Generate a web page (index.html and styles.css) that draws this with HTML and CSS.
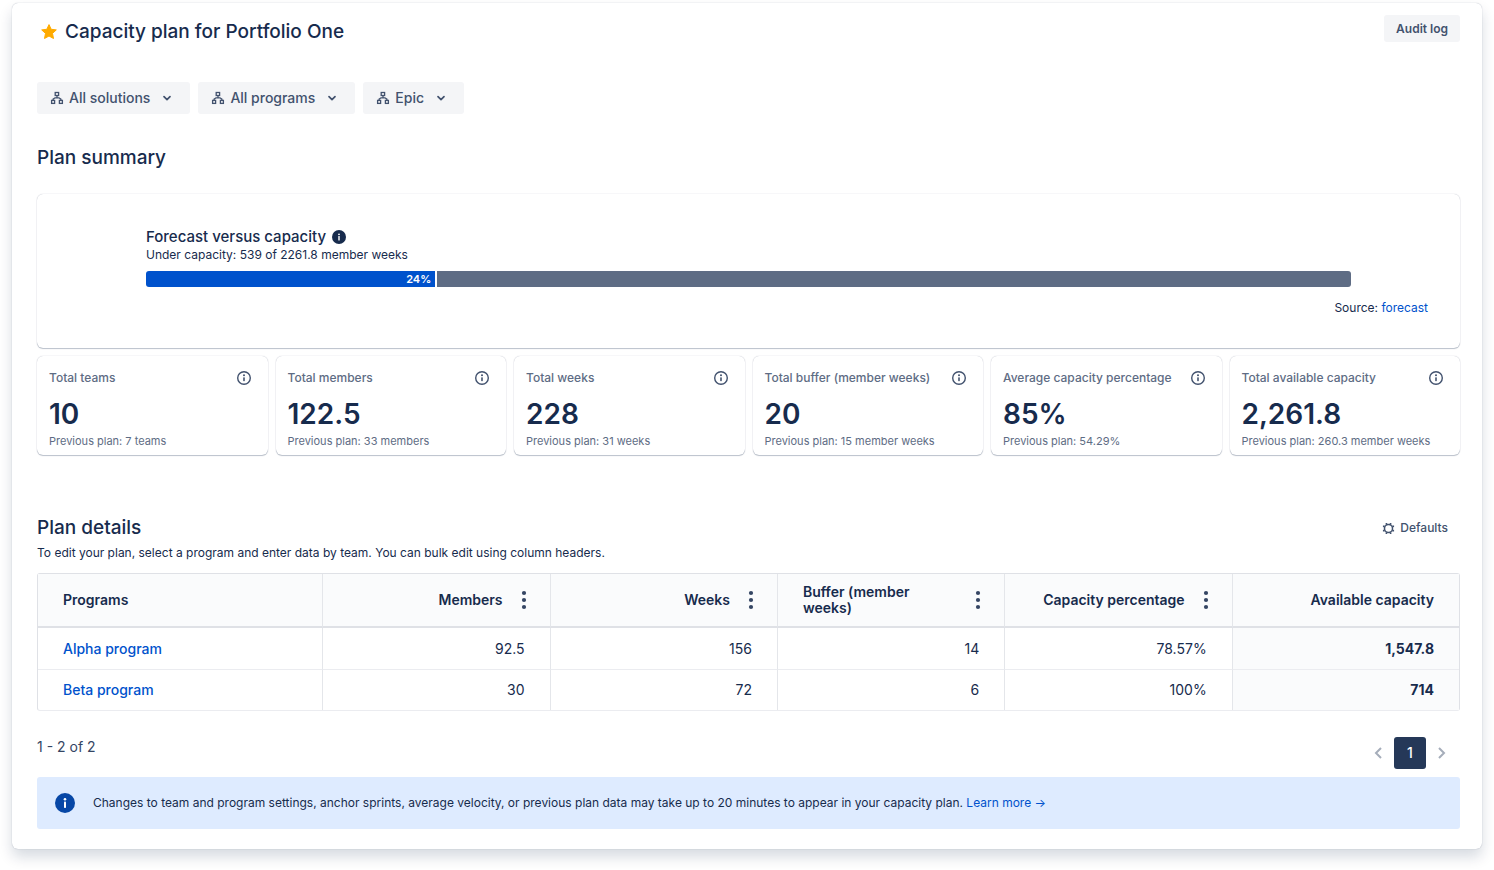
FILE: index.html
```html
<!DOCTYPE html>
<html lang="en">
<head>
<meta charset="utf-8">
<meta name="viewport" content="width=device-width, initial-scale=1">
<title>Capacity plan for Portfolio One</title>
<link rel="stylesheet" href="styles.css">
</head>
<body>
<svg class="sprite" aria-hidden="true">
  <symbol id="tree" viewBox="0 0 14 14"><g fill="none" stroke="currentColor" stroke-width="1.300"><rect x="5.200" y="1.500" width="3.400" height="3"/><rect x="1.600" y="9.400" width="3" height="3"/><rect x="9.400" y="9.400" width="3" height="3"/><path d="M7 4.500v2.300M3.100 9.400V8.200L5 6.800h4l1.900 1.400v1.200"/></g></symbol>
  <symbol id="chevron" viewBox="0 0 10 10"><path d="M2 3.600l3 3 3-3" fill="none" stroke="currentColor" stroke-width="1.700" stroke-linecap="round" stroke-linejoin="round"/></symbol>
  <symbol id="info" viewBox="0 0 16 16"><circle cx="8" cy="8" r="6.300" fill="none" stroke="currentColor" stroke-width="1.400"/><circle cx="8" cy="5.300" r="1" fill="currentColor"/><rect x="7.200" y="7.200" width="1.600" height="4" rx=".6" fill="currentColor"/></symbol>
  <symbol id="info-solid" viewBox="0 0 20 20"><circle cx="10" cy="10" r="10" fill="currentColor"/><circle cx="10" cy="6.200" r="1.300" fill="#fff"/><rect x="9" y="8.600" width="2" height="6.400" rx=".8" fill="#fff"/></symbol>
  <symbol id="dots" viewBox="0 0 6 20"><g fill="currentColor"><circle cx="3" cy="3" r="2.100"/><circle cx="3" cy="10" r="2.100"/><circle cx="3" cy="17" r="2.100"/></g></symbol>
</svg>
<main class="page">
  <header class="page-header">
    <div class="title">
      <svg class="star" viewBox="0 0 18 18" aria-hidden="true"><path d="M9 1.600l2.200 4.700 5.100.6-3.800 3.500 1 5.100L9 13l-4.500 2.500 1-5.100L1.700 6.900l5.100-.6z" fill="#ffab00" stroke="#ffab00" stroke-width="1" stroke-linejoin="round"/></svg>
      <h1>Capacity plan for Portfolio One</h1>
    </div>
    <button type="button" class="button button-small">Audit log</button>
  </header>

  <nav class="filters" aria-label="Filters">
    <button type="button" class="button"><svg class="icon-tree"><use href="#tree"/></svg>All solutions<svg class="icon-chevron"><use href="#chevron"/></svg></button>
    <button type="button" class="button"><svg class="icon-tree"><use href="#tree"/></svg>All programs<svg class="icon-chevron"><use href="#chevron"/></svg></button>
    <button type="button" class="button"><svg class="icon-tree"><use href="#tree"/></svg>Epic<svg class="icon-chevron"><use href="#chevron"/></svg></button>
  </nav>

  <section>
    <h2 class="summary-heading">Plan summary</h2>
    <div class="card forecast">
      <div class="forecast-chart">
        <h3>Forecast versus capacity <svg class="icon-help"><use href="#info-solid"/></svg></h3>
        <p>Under capacity: 539 of 2261.8 member weeks</p>
        <div class="bar"><div class="bar-fill" style="width: 24%">24%</div><div class="bar-rest"></div></div>
      </div>
      <p class="source">Source: <a href="#">forecast</a></p>
    </div>
    <div class="stats">
      <article class="card stat"><div class="stat-head"><h3>Total teams</h3><svg class="icon-info"><use href="#info"/></svg></div><strong>10</strong><p>Previous plan: 7 teams</p></article>
      <article class="card stat"><div class="stat-head"><h3>Total members</h3><svg class="icon-info"><use href="#info"/></svg></div><strong>122.5</strong><p>Previous plan: 33 members</p></article>
      <article class="card stat"><div class="stat-head"><h3>Total weeks</h3><svg class="icon-info"><use href="#info"/></svg></div><strong>228</strong><p>Previous plan: 31 weeks</p></article>
      <article class="card stat"><div class="stat-head"><h3>Total buffer (member weeks)</h3><svg class="icon-info"><use href="#info"/></svg></div><strong>20</strong><p>Previous plan: 15 member weeks</p></article>
      <article class="card stat"><div class="stat-head"><h3>Average capacity percentage</h3><svg class="icon-info"><use href="#info"/></svg></div><strong>85%</strong><p>Previous plan: 54.29%</p></article>
      <article class="card stat"><div class="stat-head"><h3>Total available capacity</h3><svg class="icon-info"><use href="#info"/></svg></div><strong>2,261.8</strong><p>Previous plan: 260.3 member weeks</p></article>
    </div>
  </section>

  <section class="details">
    <div class="details-head">
      <h2>Plan details</h2>
      <button type="button" class="defaults"><svg class="icon-gear" viewBox="0 0 14 14"><circle cx="7" cy="7" r="4.300" fill="none" stroke="currentColor" stroke-width="1.600"/><path d="M4.800 1v2M9.200 1v2M4.800 11v2M9.200 11v2M1 4.800h2M1 9.200h2M11 4.800h2M11 9.200h2" stroke="currentColor" stroke-width="1.800"/></svg>Defaults</button>
    </div>
    <p class="hint">To edit your plan, select a program and enter data by team. You can bulk edit using column headers.</p>
    <table>
      <thead>
        <tr>
          <th class="col-name" scope="col">Programs</th>
          <th scope="col"><div class="th"><span>Members</span><button type="button" aria-label="Edit members"><svg><use href="#dots"/></svg></button></div></th>
          <th scope="col"><div class="th"><span>Weeks</span><button type="button" aria-label="Edit weeks"><svg><use href="#dots"/></svg></button></div></th>
          <th scope="col"><div class="th th-wrap"><span>Buffer (member weeks)</span><button type="button" aria-label="Edit buffer"><svg><use href="#dots"/></svg></button></div></th>
          <th scope="col"><div class="th"><span>Capacity percentage</span><button type="button" aria-label="Edit capacity percentage"><svg><use href="#dots"/></svg></button></div></th>
          <th scope="col">Available capacity</th>
        </tr>
      </thead>
      <tbody>
        <tr><td class="col-name"><a href="#">Alpha program</a></td><td>92.5</td><td>156</td><td>14</td><td>78.57%</td><td class="total">1,547.8</td></tr>
        <tr><td class="col-name"><a href="#">Beta program</a></td><td>30</td><td>72</td><td>6</td><td>100%</td><td class="total">714</td></tr>
      </tbody>
    </table>
    <div class="table-footer">
      <span>1 - 2 of 2</span>
      <nav class="pager" aria-label="Pages">
        <button type="button" class="arrow" aria-label="Previous page"><svg viewBox="0 0 10 14"><path d="M8 2L3 7l5 5"/></svg></button>
        <button type="button" class="current">1</button>
        <button type="button" class="arrow" aria-label="Next page"><svg viewBox="0 0 10 14"><path d="M2 2l5 5-5 5"/></svg></button>
      </nav>
    </div>
    <div class="banner">
      <svg class="icon-banner"><use href="#info-solid"/></svg>
      <p>Changes to team and program settings, anchor sprints, average velocity, or previous plan data may take up to 20 minutes to appear in your capacity plan. <a href="#">Learn more →</a></p>
    </div>
  </section>
</main>
</body>
</html>
```
FILE: styles.css
```css
* {
  box-sizing: border-box;
}

body {
  margin: 0;
  padding: 3px 12px 20px;
  background: #fff;
  color: #172b4d;
  font: 14px/20px Inter, "Liberation Sans", sans-serif;
}

h1, h2, h3, p {
  margin: 0;
}

button {
  border: 0;
  background: none;
  padding: 0;
  color: inherit;
  font: inherit;
}

a {
  color: #0052cc;
  text-decoration: none;
}

svg {
  flex: none;
  display: block;
}

.sprite {
  position: absolute;
  width: 0;
  height: 0;
}

.page {
  padding: 12px 22px 20px 25px;
  border-radius: 6px;
  background: #fff;
  box-shadow: 0 0 1px rgba(9, 30, 66, .35), 0 8px 14px rgba(9, 30, 66, .16);
}

.page-header {
  display: flex;
  justify-content: space-between;
  align-items: flex-start;
  height: 67px;
}

.title {
  display: flex;
  align-items: center;
  gap: 7px;
  padding: 4px 0 0 3px;
}

.star {
  width: 18px;
  height: 18px;
}

h1, h2 {
  font-size: 19px;
  line-height: 26px;
  font-weight: 500;
}

.button {
  display: flex;
  align-items: center;
  height: 32px;
  padding: 0 18px 0 13px;
  border-radius: 3px;
  background: #f4f5f7;
  color: #42526e;
  font-weight: 500;
}

.button-small {
  height: 27px;
  padding: 0 12px;
  font-size: 12px;
  font-weight: 600;
}

.filters {
  display: flex;
  gap: 8px;
}

.icon-tree {
  width: 14px;
  height: 14px;
  margin-right: 5px;
}

.icon-chevron {
  width: 10px;
  height: 10px;
  margin-left: 12px;
}

.summary-heading {
  margin: 31px 0 23px;
}

.card {
  border-radius: 6px;
  background: #fff;
  box-shadow: 0 0 1px rgba(9, 30, 66, .31), 0 1px 1px rgba(9, 30, 66, .25);
}

.forecast {
  padding: 33px 32px 32px 109px;
}

.forecast-chart {
  margin-right: 77px;
}

.forecast h3 {
  display: flex;
  align-items: center;
  gap: 6px;
  font-size: 15px;
  line-height: 20px;
  font-weight: 500;
}

.forecast p {
  font-size: 12px;
  line-height: 16px;
}

.icon-help {
  width: 14px;
  height: 14px;
}

.bar {
  display: flex;
  gap: 2px;
  height: 16px;
  margin: 8px 0 13px;
}

.bar-fill {
  padding-right: 4px;
  border-radius: 3px 0 0 3px;
  background: #0052cc;
  color: #fff;
  font-size: 11px;
  line-height: 16px;
  font-weight: 600;
  text-align: right;
}

.bar-rest {
  flex: 1;
  border-radius: 0 3px 3px 0;
  background: #5e6c84;
}

.source {
  text-align: right;
}

.stats {
  display: grid;
  grid-template-columns: repeat(6, 1fr);
  gap: 8px;
  margin-top: 8px;
}

.stat {
  padding: 14px 16px 8px 12px;
}

.stat-head {
  display: flex;
  justify-content: space-between;
  align-items: center;
  color: #5e6c84;
}

.stat h3 {
  font-size: 12px;
  line-height: 16px;
  font-weight: 500;
  white-space: nowrap;
}

.icon-info {
  width: 16px;
  height: 16px;
  color: #42526e;
}

.stat strong {
  display: block;
  margin: 12px 0 5px;
  font-size: 28px;
  line-height: 32px;
  font-weight: 600;
}

.stat p {
  color: #5e6c84;
  font-size: 11px;
  line-height: 12px;
}

.details {
  margin-top: 60px;
}

.details-head {
  display: flex;
  justify-content: space-between;
  align-items: center;
}

.defaults {
  display: flex;
  align-items: center;
  gap: 5px;
  padding-right: 12px;
  color: #42526e;
  font-size: 12px;
  font-weight: 500;
}

.icon-gear {
  width: 13px;
  height: 13px;
}

.hint {
  margin: 4px 0 12px;
  font-size: 12px;
  line-height: 16px;
}

table {
  width: 100%;
  border: 1px solid #dfe1e6;
  border-bottom-color: #ebecf0;
  border-radius: 3px;
  border-spacing: 0;
  table-layout: fixed;
}

th, td {
  width: 16%;
  padding: 0 25px;
  border-left: 1px solid #e4e6ea;
  text-align: right;
}

th {
  height: 54px;
  background: #fafbfc;
  border-bottom: 2px solid #dfe1e6;
  line-height: 16px;
  font-weight: 600;
}

td {
  height: 41px;
}

tbody tr + tr td {
  border-top: 1px solid #ebecf0;
}

.col-name {
  width: auto;
  border-left: 0;
  text-align: left;
}

.col-name a {
  font-weight: 500;
}

.total {
  background: #fafbfc;
  font-weight: 700;
}

.th {
  display: flex;
  justify-content: flex-end;
  align-items: center;
  gap: 18px;
  margin-right: -2px;
}

.th-wrap {
  justify-content: space-between;
  text-align: left;
}

.th-wrap span {
  max-width: 120px;
}

.th svg {
  width: 6px;
  height: 20px;
  color: #344563;
}

.table-footer {
  display: flex;
  justify-content: space-between;
  align-items: flex-start;
  padding-top: 26px;
  color: #344563;
}

.pager {
  display: flex;
  align-items: center;
  gap: 11px;
  padding-right: 13px;
}

.current {
  width: 32px;
  height: 32px;
  border-radius: 3px;
  background: #253858;
  color: #fff;
  font-weight: 500;
}

.arrow svg {
  width: 10px;
  height: 14px;
  fill: none;
  stroke: #a5adba;
  stroke-width: 2;
}

.banner {
  display: flex;
  align-items: center;
  gap: 18px;
  min-height: 52px;
  margin-top: 8px;
  padding: 8px 18px;
  border-radius: 3px;
  background: #deebff;
  font-size: 12px;
  line-height: 16px;
}

.icon-banner {
  width: 20px;
  height: 20px;
  color: #0747a6;
}
```
